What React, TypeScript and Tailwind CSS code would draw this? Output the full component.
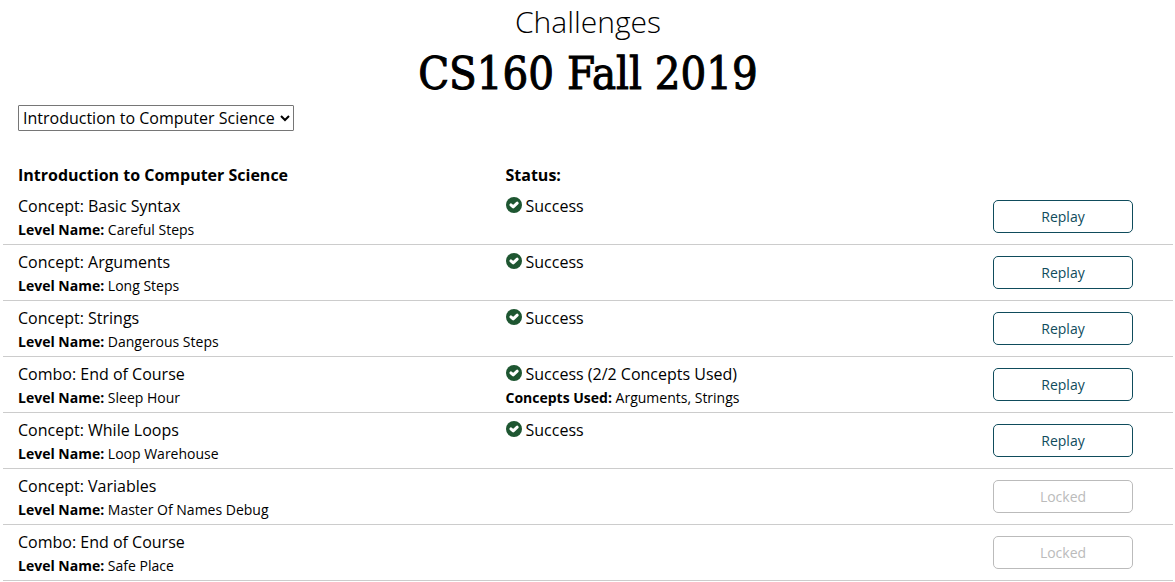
type Level = {
  title: string;
  level: string;
  status?: string;
  concepts?: string;
};

const levels: Level[] = [
  { title: "Concept: Basic Syntax", level: "Careful Steps", status: "Success" },
  { title: "Concept: Arguments", level: "Long Steps", status: "Success" },
  { title: "Concept: Strings", level: "Dangerous Steps", status: "Success" },
  {
    title: "Combo: End of Course",
    level: "Sleep Hour",
    status: "Success (2/2 Concepts Used)",
    concepts: "Arguments, Strings",
  },
  { title: "Concept: While Loops", level: "Loop Warehouse", status: "Success" },
  { title: "Concept: Variables", level: "Master Of Names Debug" },
  { title: "Combo: End of Course", level: "Safe Place" },
];

function CheckIcon() {
  return (
    <svg viewBox="0 0 16 16" className="mt-[3px] size-4 shrink-0" aria-hidden="true">
      <circle cx="8" cy="8" r="8" fill="#1e5631" />
      <path
        d="M4.9 7.9L7.2 9.9L11.2 6.2"
        fill="none"
        stroke="#fff"
        strokeWidth="3"
        strokeLinecap="round"
        strokeLinejoin="round"
      />
    </svg>
  );
}

function Detail({ label, value }: { label: string; value: string }) {
  return (
    <p className="text-sm leading-6">
      <strong className="font-bold">{label}</strong> {value}
    </p>
  );
}

function LevelRow({ item }: { item: Level }) {
  const locked = !item.status;
  return (
    <tr className="border-b border-[#ccc] align-top">
      <td className="px-[15px] pt-[5px] pb-0.5">
        <p className="leading-6">{item.title}</p>
        <Detail label="Level Name:" value={item.level} />
      </td>
      <td className="px-[15px] pt-[5px] pb-0.5">
        {item.status && (
          <p className="flex gap-1 leading-6">
            <CheckIcon />
            {item.status}
          </p>
        )}
        {item.concepts && <Detail label="Concepts Used:" value={item.concepts} />}
      </td>
      <td className="px-[15px] pt-[11px]">
        <button
          type="button"
          disabled={locked}
          className="block h-[33px] w-[140px] rounded-[5px] border border-[#0f4c5c] text-sm text-[#0f4c5c] disabled:border-[#bbb] disabled:text-[#bbb]"
        >
          {locked ? "Locked" : "Replay"}
        </button>
      </td>
    </tr>
  );
}

export default function App() {
  return (
    <main className="bg-white pl-[3px] pr-0.5 font-['Open_Sans',sans-serif] text-base font-normal text-black">
      <header className="text-center">
        <p className="pt-1 text-[30px] leading-9 font-light">Challenges</p>
        <h1 className="pt-1 font-['DejaVu_Serif_Condensed','DejaVu_Serif',serif] text-[45px] leading-[60px] font-normal [-webkit-text-stroke:1px_black]">
          CS160 Fall 2019
        </h1>
      </header>
      <div className="px-[15px] pt-px">
        <select
          aria-label="Course"
          className="block h-[26px] appearance-auto rounded-[1px] border border-[#767676] bg-white pr-0.5"
        >
          <option>Introduction to Computer Science</option>
        </select>
      </div>
      <table className="mt-8 w-full table-fixed border-collapse text-left">
        <thead>
          <tr className="leading-6">
            <th className="w-5/12 px-[15px] pb-0.5 font-bold">Introduction to Computer Science</th>
            <th className="w-5/12 px-[15px] pb-0.5 font-bold">Status:</th>
            <td className="w-1/6" />
          </tr>
        </thead>
        <tbody>
          {levels.map((item) => (
            <LevelRow key={item.level} item={item} />
          ))}
        </tbody>
      </table>
    </main>
  );
}
